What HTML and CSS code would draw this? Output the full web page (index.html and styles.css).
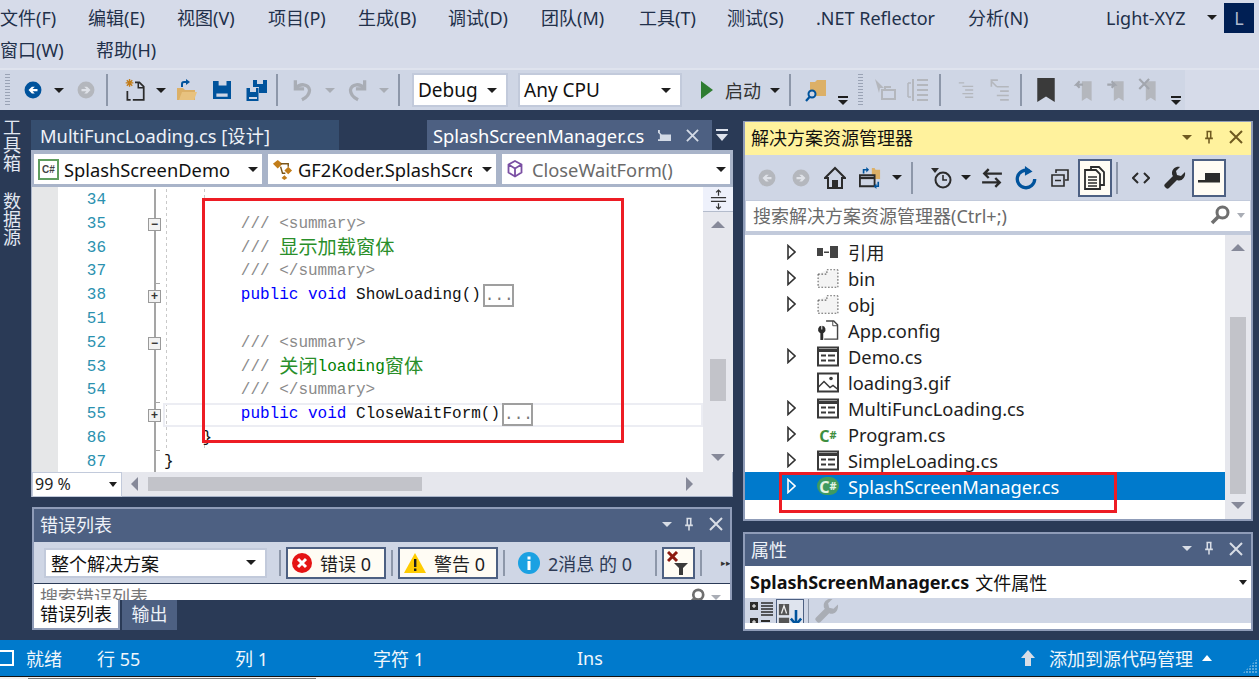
FILE: index.html
```html
<!DOCTYPE html>
<html lang="zh-CN">
<head>
<meta charset="utf-8">
<title>SplashScreenManager.cs</title>
<link rel="stylesheet" href="styles.css">
</head>
<body>
<svg class="defs" aria-hidden="true">
  <symbol id="i-back" viewBox="0 0 16 16"><circle cx="8" cy="8" r="7.5" fill="#00539c"/><path d="M12 7H7.6l2-2H7L4 8l3 3h2.6l-2-2H12z" fill="#fff"/></symbol>
  <symbol id="i-fwd" viewBox="0 0 16 16"><circle cx="8" cy="8" r="7.5" fill="#b4b7bd"/><path d="M4 7h4.4l-2-2H9l3 3-3 3H6.400l2-2H4z" fill="#dfe2e8"/></symbol>
  <symbol id="i-gback" viewBox="0 0 16 16"><circle cx="8" cy="8" r="7.5" fill="#b4b7bd"/><path d="M12 7H7.6l2-2H7L4 8l3 3h2.6l-2-2H12z" fill="#dfe2e8"/></symbol>
  <symbol id="i-new" viewBox="0 0 20 22"><path d="M5 1v7M1.500 4.500h7M2.500 2l5 5M7.500 2l-5 5" stroke="#c27d1a" stroke-width="1.300" fill="none"/><path d="M10 4h4l4 4v12H8M3 12v8h3" stroke="#2b2b2b" stroke-width="1.600" fill="none"/><path d="M13 4v5h5" stroke="#2b2b2b" stroke-width="1.400" fill="none"/></symbol>
  <symbol id="i-open" viewBox="0 0 22 22"><path d="M1 9h6l2 2h10v10H4L1 21z" fill="#dcb067"/><path d="M3 21l3-8h15l-3 8z" fill="#e8c27f"/><path d="M6 8V5a2 2 0 0 1 2-2h4" stroke="#00539c" stroke-width="2" fill="none"/><path d="M10 0l4 3-4 3z" fill="#00539c"/></symbol>
  <symbol id="i-save" viewBox="0 0 16 16"><path d="M0 0h16v16H0z" fill="#00539c"/><path d="M5 0h7v4H5zM3 11h10v3H3z" fill="#cfd6e5"/></symbol>
  <symbol id="i-saveall" viewBox="0 0 22 22"><path d="M8 1h14v13H8z" fill="#00539c"/><path d="M12 1h6v4h-6z" fill="#cfd6e5"/><path d="M1 8h13v14H1z" fill="#cfd6e5"/><path d="M1.500 9h12v13h-12z" fill="#00539c"/><path d="M5 9h6v4H5zM4 18h8v2H4z" fill="#cfd6e5"/></symbol>
  <symbol id="i-undo" viewBox="0 0 20 22"><path d="M3 2v8h8" fill="none" stroke="#a9adb5" stroke-width="3"/><path d="M4 9c3-4 11-4 12 2 0 4-3 7-7 9" fill="none" stroke="#a9adb5" stroke-width="3"/></symbol>
  <symbol id="i-redo" viewBox="0 0 20 22"><path d="M17 2v8H9" fill="none" stroke="#a9adb5" stroke-width="3"/><path d="M16 9C13 5 5 5 4 11c0 4 3 7 7 9" fill="none" stroke="#a9adb5" stroke-width="3"/></symbol>
  <symbol id="i-play" viewBox="0 0 12 18"><path d="M0 0l12 9-12 9z" fill="#2f7d32"/></symbol>
  <symbol id="i-find" viewBox="0 0 22 24"><path d="M5 4h5l2-2h9v16H5z" fill="#dcb067"/><circle cx="7" cy="16" r="3.500" fill="#cfd6e5" stroke="#00539c" stroke-width="2"/><path d="M4.500 19L1 23" stroke="#00539c" stroke-width="2.200"/></symbol>
  <symbol id="i-d1" viewBox="0 0 22 24"><path d="M1 1l9 9H6l-1 5z" fill="#b4b7bd"/><path d="M8 12h13v9H8zM11 12V9h6" fill="none" stroke="#b4b7bd" stroke-width="2"/></symbol>
  <symbol id="i-d2" viewBox="0 0 22 24"><path d="M6 1v22M10 2h11M10 7h11M10 12h11M10 17h11M10 22h11" stroke="#b4b7bd" stroke-width="2"/><path d="M1 5h3M1 19h3M1 5v14" stroke="#b4b7bd" stroke-width="1.500" fill="none"/></symbol>
  <symbol id="i-d3" viewBox="0 0 18 20"><path d="M1 2h6M5 6h12M8 10h9M5 14h12M8 18h9" stroke="#b4b7bd" stroke-width="1.500"/></symbol>
  <symbol id="i-d4" viewBox="0 0 20 22"><path d="M9 2H3v6M3 3l5 5" stroke="#b4b7bd" stroke-width="1.500" fill="none"/><path d="M8 8h11M11 12h8M8 16h11M11 20h8" stroke="#b4b7bd" stroke-width="1.500"/></symbol>
  <symbol id="i-mark" viewBox="0 0 16 22"><path d="M0 0h16v22l-8-5-8 5z" fill="#3a3a3a"/></symbol>
  <symbol id="i-m1" viewBox="0 0 18 22"><path d="M7 3h9v18l-4.500-3L7 21z" fill="#b4b7bd"/><path d="M8 6H2l3-3M2 6l3 3" fill="none" stroke="#a2a6ae" stroke-width="2"/></symbol>
  <symbol id="i-m2" viewBox="0 0 18 22"><path d="M2 3h9v18l-4.500-3L2 21z" fill="#b4b7bd" transform="translate(5)"/><path d="M1 6h7l-3-3M8 6l-3 3" fill="none" stroke="#a2a6ae" stroke-width="2"/></symbol>
  <symbol id="i-m3" viewBox="0 0 18 22"><path d="M7 3h9v18l-4.500-3L7 21z" fill="#b4b7bd"/><path d="M1 1l9 9M10 1l-9 9" stroke="#a2a6ae" stroke-width="2"/></symbol>
  <symbol id="i-class" viewBox="0 0 22 22"><path d="M6 1l5 4-5 5-5-5z" fill="#c27d1a"/><path d="M17 8l4 4-4 4-4-4zM13 17l3 3-3 2-3-2z" fill="#c27d1a"/><path d="M9 8l2 7h3M9 5h8v3" fill="none" stroke="#7a5518" stroke-width="1.500"/></symbol>
  <symbol id="i-cube" viewBox="0 0 16 18"><path d="M8 1l6.500 3.500v8L8 16.500 1.500 12.500v-8zM1.500 4.500L8 8.500l6.500-4M8 8.500V16.500" fill="none" stroke="#7a4fa3" stroke-width="1.800"/></symbol>
  <symbol id="i-pin" viewBox="0 0 14 16"><path d="M4 1h6M5 1v8h4V1M2.500 9h9M7 9v6" fill="none" stroke="currentColor" stroke-width="1.800"/></symbol>
  <symbol id="i-pinh" viewBox="0 0 16 14"><path d="M1 1h2v3l2 2h10v7H1v-2h2V6L1 4z" fill="currentColor"/></symbol>
  <symbol id="i-x" viewBox="0 0 14 14"><path d="M1 1l12 12M13 1L1 13" stroke="currentColor" stroke-width="2"/></symbol>
  <symbol id="i-split" viewBox="0 0 18 22"><path d="M1 9h16M1 13h16" stroke="#333" stroke-width="1.500"/><path d="M9 1v6M6.500 3.500L9 1l2.500 2.500M9 15v6M6.500 18.500L9 21l2.500-2.500" fill="none" stroke="#333" stroke-width="1.300"/></symbol>
  <symbol id="i-home" viewBox="0 0 22 22"><path d="M11 1L1 11h3v10h14V11h3z" fill="none" stroke="#2b2b2b" stroke-width="2"/><path d="M8 13h6v8H8z" fill="#2b2b2b"/></symbol>
  <symbol id="i-sync" viewBox="0 0 24 24"><path d="M14 1h3l1 2h5v10H14z" fill="#dcb067"/><path d="M1 9h16v12H1z" fill="#cfd6e5" stroke="#2b2b2b" stroke-width="2"/><path d="M1 12h16" stroke="#2b2b2b" stroke-width="2.500"/><path d="M5 7V3h4" fill="none" stroke="#00539c" stroke-width="1.800"/><path d="M8 0l3 3-3 3z" fill="#00539c"/><path d="M21 16v5h-3" fill="none" stroke="#00539c" stroke-width="1.800"/><path d="M19 24l-3-3 3-3z" fill="#00539c"/></symbol>
  <symbol id="i-hist" viewBox="0 0 22 22"><circle cx="13" cy="13" r="7.500" fill="none" stroke="#2b2b2b" stroke-width="2"/><path d="M13 8v5h4" fill="none" stroke="#2b2b2b" stroke-width="1.600"/><path d="M1 1h8L5 6z" fill="#2b2b2b"/></symbol>
  <symbol id="i-swap" viewBox="0 0 20 18"><path d="M4 5h15M7 1L3 5l4 4M1 13h15M13 9l4 4-4 4" fill="none" stroke="#2b2b2b" stroke-width="2.200"/></symbol>
  <symbol id="i-refresh" viewBox="0 0 20 22"><path d="M13 4.500A8 8 0 1 0 18 12" fill="none" stroke="#00539c" stroke-width="3"/><path d="M9 0l7 5-7 4z" fill="#00539c"/></symbol>
  <symbol id="i-coll" viewBox="0 0 18 18"><path d="M5 4V1h12v10h-3M1 6h12v11H1zM4 11.500h6" fill="#cfd6e5" stroke="#2b2b2b" stroke-width="1.600"/></symbol>
  <symbol id="i-all" viewBox="0 0 22 24"><path d="M7 4V1h8l5 5v13h-4" fill="none" stroke="#2b2b2b" stroke-width="1.800"/><path d="M1 4h11l4 4v15H1z" fill="none" stroke="#2b2b2b" stroke-width="1.800"/><path d="M4 11h9M4 14h9M4 17h9M4 20h9" stroke="#2b2b2b" stroke-width="1.400"/></symbol>
  <symbol id="i-code" viewBox="0 0 18 12"><path d="M6 1L1 6l5 5M12 1l5 5-5 5" fill="none" stroke="#2b2b2b" stroke-width="2"/></symbol>
  <symbol id="i-wrench" viewBox="0 0 22 22"><path d="M21 5l-4 4-4-1-1-4 4-4c-4-1-8 2-8 6 0 1 0 2 1 3L1 17c-1 1-1 2 0 3l1 1c1 1 2 1 3 0l8-8c4 2 9-2 8-8z" fill="currentColor"/></symbol>
  <symbol id="i-dash" viewBox="0 0 24 12"><path d="M8 1h15v7H8z M1 8h22v2.500H1z" fill="#2b2b2b"/></symbol>
  <symbol id="i-search" viewBox="0 0 20 20"><circle cx="12.500" cy="7.500" r="5.500" fill="none" stroke="#6f6f6f" stroke-width="3"/><path d="M8 12l-6 6" stroke="#6f6f6f" stroke-width="3.500"/></symbol>
  <symbol id="i-ref" viewBox="0 0 22 12"><path d="M0 2h6v8H0zM13 0h8v12h-8zM7 5.500h5v1.500H7z" fill="#444"/></symbol>
  <symbol id="i-dotted" viewBox="0 0 20 18"><path d="M9 1h10M1 5v12h18V1M1 5h8V1" fill="#f4f4f4" stroke="#666" stroke-width="1" stroke-dasharray="1.500 1.500"/></symbol>
  <symbol id="i-config" viewBox="0 0 22 22"><path d="M9 1h8l4 4v15H7" fill="none" stroke="#444" stroke-width="1.500"/><path d="M16 1v5h5" fill="none" stroke="#444"/><path d="M4 6a4 4 0 0 0-2 7l1 1v7h3v-7l1-1a4 4 0 0 0-2-7v4H4z" fill="#2b2b2b"/></symbol>
  <symbol id="i-form" viewBox="0 0 22 20"><path d="M1 1h20v18H1z" fill="#fff" stroke="#3a3a3a" stroke-width="2"/><path d="M1 4h20" stroke="#3a3a3a" stroke-width="3"/><path d="M4 8h5v2H4zM11 8h7v2h-7zM4 13h5v2H4zM11 13h7v2h-7z" fill="#3a3a3a"/></symbol>
  <symbol id="i-img" viewBox="0 0 22 20"><path d="M1 1h20v18H1z" fill="#fff" stroke="#3a3a3a" stroke-width="2"/><circle cx="14" cy="6" r="1.800" fill="#3a3a3a"/><path d="M1 15l6-6 6 6 3-2 5 4" fill="none" stroke="#3a3a3a" stroke-width="1.500"/></symbol>
  <symbol id="i-arrow" viewBox="0 0 9 16"><path d="M1 1.500L8 8l-7 6.500z" fill="none" stroke="currentColor" stroke-width="1.600"/></symbol>
  <symbol id="i-err" viewBox="0 0 20 20"><circle cx="10" cy="10" r="10" fill="#e51414"/><path d="M6 6l8 8M14 6l-8 8" stroke="#fff" stroke-width="3"/></symbol>
  <symbol id="i-warn" viewBox="0 0 22 20"><path d="M11 0l11 20H0z" fill="#ffcc00"/><path d="M10 6h2.400v8H10zM10 15.500h2.400V18H10z" fill="#1e1e1e"/></symbol>
  <symbol id="i-info" viewBox="0 0 22 22"><circle cx="11" cy="11" r="11" fill="#1ba1e2"/><path d="M9.500 4.500h3v3h-3zM9.500 9h3v9h-3z" fill="#fff"/></symbol>
  <symbol id="i-filter" viewBox="0 0 22 24"><path d="M1 1l9 9M10 1l-9 9" stroke="#8c1a10" stroke-width="3"/><path d="M7 12h14l-5 5v7h-4v-7z" fill="#3a3a3a"/></symbol>
  <symbol id="i-tree" viewBox="0 0 24 24"><path d="M0 1h8v8H0zM0 17h8v8H0z" fill="#2b2b2b"/><path d="M2 5h4M4 3v4M2 21h4M4 19v4" stroke="#fff"/><path d="M11 2h12M11 5h12M11 8h12M11 11h12M11 14h12" stroke="#2b2b2b" stroke-width="1.500"/><path d="M11 20h9" stroke="#2b2b2b" stroke-width="2"/></symbol>
  <symbol id="i-az" viewBox="0 0 28 30"><path d="M1 1h12v13H1z" fill="#555"/><path d="M1 17h12v13H1z" fill="#555"/><path d="M4 12l3-9 3 9" stroke="#eee" stroke-width="1.500" fill="none"/><path d="M21 8v16M15 18l6 7 6-7" fill="none" stroke="#00539c" stroke-width="3"/></symbol>
  <symbol id="i-up" viewBox="0 0 14 16"><path d="M7 0L0 8h4v8h6V8h4z" fill="#d8dde6"/></symbol>
</svg>

<div class="app">
  <nav class="menu">
    <div class="menu-row">
      <span>文件(F)</span><span>编辑(E)</span><span>视图(V)</span><span>项目(P)</span><span>生成(B)</span><span>调试(D)</span><span>团队(M)</span><span>工具(T)</span><span>测试(S)</span><span>.NET Reflector</span><span>分析(N)</span>
      <span class="user">Light-XYZ</span><i class="caret"></i><b class="avatar">L</b>
    </div>
    <div class="menu-row second"><span>窗口(W)</span><span>帮助(H)</span></div>
  </nav>

  <div class="toolbar">
    <i class="grip"></i>
    <svg class="ic"><use href="#i-back"/></svg><i class="caret"></i><svg class="ic"><use href="#i-fwd"/></svg><i class="sep"></i>
    <svg class="ic big"><use href="#i-new"/></svg><i class="caret"></i><svg class="ic big"><use href="#i-open"/></svg><svg class="ic"><use href="#i-save"/></svg><svg class="ic big"><use href="#i-saveall"/></svg><i class="sep"></i>
    <svg class="ic big"><use href="#i-undo"/></svg><i class="caret dim"></i><svg class="ic big"><use href="#i-redo"/></svg><i class="caret dim"></i><i class="sep"></i>
    <div class="combo debug"><span>Debug</span><i class="caret"></i></div>
    <div class="combo cpu"><span>Any CPU</span><i class="caret"></i></div>
    <svg class="ic play"><use href="#i-play"/></svg><span class="start">启动</span><i class="caret"></i><i class="sep"></i>
    <svg class="ic big"><use href="#i-find"/></svg><i class="more"></i><i class="grip"></i>
    <svg class="ic big"><use href="#i-d1"/></svg><svg class="ic big"><use href="#i-d2"/></svg><i class="sep"></i>
    <svg class="ic"><use href="#i-d3"/></svg><svg class="ic big"><use href="#i-d4"/></svg><i class="sep"></i>
    <svg class="ic big"><use href="#i-mark"/></svg><svg class="ic big"><use href="#i-m1"/></svg><svg class="ic big"><use href="#i-m2"/></svg><svg class="ic big"><use href="#i-m3"/></svg><i class="more"></i>
  </div>

  <main class="main">
    <aside class="strip"><span>工具箱</span><span>数据源</span></aside>

    <div class="left">
      <section class="doc">
        <div class="tabs">
          <div class="tab one">MultiFuncLoading.cs [设计]</div>
          <div class="tab two"><span>SplashScreenManager.cs</span><svg class="tab-ic pinh"><use href="#i-pinh"/></svg><svg class="tab-ic"><use href="#i-x"/></svg></div>
          <div class="tab-menu"></div>
        </div>
        <div class="navbar">
          <div class="nav-box"><span class="cs-badge">C#</span><span class="nav-text">SplashScreenDemo</span><i class="caret"></i></div>
          <div class="nav-box"><svg class="nav-ic"><use href="#i-class"/></svg><span class="nav-text clip">GF2Koder.SplashScreenManager</span><i class="caret"></i></div>
          <div class="nav-box"><svg class="nav-ic cube"><use href="#i-cube"/></svg><span class="nav-text dim">CloseWaitForm()</span><i class="caret"></i></div>
        </div>
        <div class="editor">
          <div class="margin"></div>
          <div class="lines">
            <div class="line"><span class="num">34</span><span class="fold"></span><span class="code"></span></div>
            <div class="line"><span class="num">35</span><span class="fold"><i class="box">−</i></span><span class="code in"><s>/// &lt;summary&gt;</s></span></div>
            <div class="line"><span class="num">36</span><span class="fold"></span><span class="code in"><s>/// </s><em class="zh">显示加载窗体</em></span></div>
            <div class="line"><span class="num">37</span><span class="fold tick"></span><span class="code in"><s>/// &lt;/summary&gt;</s></span></div>
            <div class="line"><span class="num">38</span><span class="fold"><i class="box">+</i></span><span class="code in"><b>public void</b> ShowLoading()<u>...</u></span></div>
            <div class="line"><span class="num">51</span><span class="fold"></span><span class="code"></span></div>
            <div class="line"><span class="num">52</span><span class="fold"><i class="box">−</i></span><span class="code in"><s>/// &lt;summary&gt;</s></span></div>
            <div class="line"><span class="num">53</span><span class="fold"></span><span class="code in"><s>/// </s><em class="zh">关闭</em><em>loading</em><em class="zh">窗体</em></span></div>
            <div class="line"><span class="num">54</span><span class="fold tick"></span><span class="code in"><s>/// &lt;/summary&gt;</s></span></div>
            <div class="line"><span class="num">55</span><span class="fold"><i class="box">+</i></span><span class="code in current"><b>public void</b> CloseWaitForm()<u>...</u></span></div>
            <div class="line"><span class="num">86</span><span class="fold tick"></span><span class="code close">}</span></div>
            <div class="line"><span class="num">87</span><span class="fold"></span><span class="code end">}</span></div>
          </div>
          <div class="vscroll">
            <div class="split"><svg><use href="#i-split"/></svg></div>
            <i class="tri up"></i>
            <div class="track"><i class="thumb"></i></div>
            <i class="tri down"></i>
          </div>
          <div class="redbox code-red"></div>
        </div>
        <div class="hscroll">
          <div class="zoom"><span>99 %</span><i class="caret"></i></div>
          <i class="tri left-tri"></i>
          <div class="htrack"><i class="hthumb"></i></div>
          <i class="tri right-tri"></i>
        </div>
      </section>

      <section class="errors">
        <header class="title dark"><span>错误列表</span><i class="caret light"></i><svg class="t-ic"><use href="#i-pin"/></svg><svg class="t-ic x"><use href="#i-x"/></svg></header>
        <div class="err-bar">
          <div class="combo scope"><span>整个解决方案</span><i class="caret"></i></div>
          <i class="sep"></i>
          <div class="toggle"><svg><use href="#i-err"/></svg><span>错误 0</span></div>
          <i class="sep"></i>
          <div class="toggle"><svg class="warn"><use href="#i-warn"/></svg><span>警告 0</span></div>
          <i class="sep"></i>
          <div class="plain"><svg><use href="#i-info"/></svg><span>2消息 的 0</span></div>
          <i class="sep"></i>
          <div class="toggle filter"><svg><use href="#i-filter"/></svg></div>
          <i class="sep"></i>
          <span class="chev">▸▸</span>
        </div>
        <div class="err-search"><span>搜索错误列表</span><svg><use href="#i-search"/></svg><i class="caret dim"></i></div>
      </section>
      <div class="bottom-tabs"><span class="btab on">错误列表</span><span class="btab">输出</span></div>
    </div>

    <div class="right">
      <section class="explorer">
        <header class="title active"><span>解决方案资源管理器</span><i class="caret brown"></i><svg class="t-ic"><use href="#i-pin"/></svg><svg class="t-ic x"><use href="#i-x"/></svg></header>
        <div class="ex-bar">
          <svg class="ic"><use href="#i-gback"/></svg><svg class="ic"><use href="#i-fwd"/></svg><svg class="ic big"><use href="#i-home"/></svg><svg class="ic big"><use href="#i-sync"/></svg><i class="caret"></i><i class="sep"></i>
          <svg class="ic big"><use href="#i-hist"/></svg><i class="caret"></i><svg class="ic big"><use href="#i-swap"/></svg><svg class="ic big"><use href="#i-refresh"/></svg><svg class="ic"><use href="#i-coll"/></svg>
          <div class="press"><svg><use href="#i-all"/></svg></div><i class="sep"></i>
          <svg class="ic"><use href="#i-code"/></svg><svg class="ic big wrench"><use href="#i-wrench"/></svg>
          <div class="press"><svg class="dash"><use href="#i-dash"/></svg></div>
        </div>
        <div class="ex-search"><span>搜索解决方案资源管理器(Ctrl+;)</span><svg><use href="#i-search"/></svg><i class="caret dim"></i></div>
        <div class="tree">
          <ul class="nodes">
            <li><svg class="exp"><use href="#i-arrow"/></svg><svg class="ni ref"><use href="#i-ref"/></svg>引用</li>
            <li><svg class="exp"><use href="#i-arrow"/></svg><svg class="ni"><use href="#i-dotted"/></svg>bin</li>
            <li><svg class="exp"><use href="#i-arrow"/></svg><svg class="ni"><use href="#i-dotted"/></svg>obj</li>
            <li><i class="exp"></i><svg class="ni"><use href="#i-config"/></svg>App.config</li>
            <li><svg class="exp"><use href="#i-arrow"/></svg><svg class="ni"><use href="#i-form"/></svg>Demo.cs</li>
            <li><i class="exp"></i><svg class="ni"><use href="#i-img"/></svg>loading3.gif</li>
            <li><svg class="exp"><use href="#i-arrow"/></svg><svg class="ni"><use href="#i-form"/></svg>MultiFuncLoading.cs</li>
            <li><svg class="exp"><use href="#i-arrow"/></svg><span class="ni csharp">C<small>#</small></span>Program.cs</li>
            <li><svg class="exp"><use href="#i-arrow"/></svg><svg class="ni"><use href="#i-form"/></svg>SimpleLoading.cs</li>
            <li class="selected"><svg class="exp"><use href="#i-arrow"/></svg><span class="ni csharp sel">C<small>#</small></span>SplashScreenManager.cs</li>
          </ul>
          <div class="vscroll tree-scroll">
            <i class="tri up"></i>
            <div class="track"><i class="thumb"></i></div>
            <i class="tri down"></i>
          </div>
          <div class="redbox tree-red"></div>
        </div>
      </section>

      <section class="props">
        <header class="title dark"><span>属性</span><i class="caret light"></i><svg class="t-ic"><use href="#i-pin"/></svg><svg class="t-ic x"><use href="#i-x"/></svg></header>
        <div class="prop-head"><b>SplashScreenManager.cs</b><span>文件属性</span><i class="caret"></i></div>
        <div class="prop-bar"><svg class="p1"><use href="#i-tree"/></svg><div class="p-press"><svg><use href="#i-az"/></svg></div><i class="sep"></i><svg class="p3"><use href="#i-wrench"/></svg></div>
      </section>
    </div>
  </main>

  <footer class="status">
    <i class="st-box"></i><span class="s1">就绪</span><span class="s2">行 55</span><span class="s3">列 1</span><span class="s4">字符 1</span><span class="s5">Ins</span>
    <svg class="st-up"><use href="#i-up"/></svg><span class="s6">添加到源代码管理</span><i class="caret white"></i><i class="st-grip"></i>
  </footer>
  <div class="tail"></div>
</div>
</body>
</html>
```

FILE: styles.css
```css
* { box-sizing: border-box; }
html, body { margin: 0; padding: 0; }
body {
  width: 1259px; height: 679px; overflow: hidden;
  font-family: "Noto Sans", "Noto Sans CJK SC", sans-serif;
  font-size: 18px; color: #1e1e1e; background: #2a3a56;
}
.defs { position: absolute; width: 0; height: 0; }
i, em { font-style: normal; }
svg { display: block; }
.app { display: grid; grid-template-rows: 68px 42px 530px 36px 3px; height: 679px; }

/* shared */
.caret { display: block; width: 0; height: 0; flex: none;
  border-left: 5px solid transparent; border-right: 5px solid transparent; border-top: 5px solid #1e1e1e; }
.caret.dim { border-top-color: #a9adb5; }
.caret.light { border-top-color: #d8dde6; }
.caret.brown { border-top-color: #6f5a20; }
.caret.white { border-top: 0; border-bottom: 6px solid #fff; }
.sep { display: block; flex: none; width: 2px; height: 32px; background: #8d97a9; }
.ic { width: 18px; height: 18px; flex: none; }
.ic.big { width: 22px; height: 24px; }

/* menu */
.menu { background: #d6dbe9; color: #22304a; }
.menu-row { height: 33px; display: grid; align-items: center; padding-top: 2px;
  grid-template-columns: 88px 89px 91px 90px 90px 93px 98px 88px 89px 152px 138px 101px 17px 31px; }
.menu-row.second { padding-top: 1px; grid-template-columns: 96px 96px; }
.menu-row span { line-height: 30px; white-space: nowrap; }
.avatar { width: 30px; height: 30px; background: #001f54; color: #aeb9cf; font-weight: 400; text-align: center; line-height: 30px; }

/* main toolbar: each track is the distance to the next item */
.toolbar { background: linear-gradient(#cfd6e5, #cfd6e5) 0 0 / 1185px 100% no-repeat, #d6dbe9; display: grid; align-items: center; justify-items: start; padding-left: 5px; border-top: 2px solid #dfe3ee;
  grid-template-columns: 19px 30px 23px 29px 18px 32px 20px 37px 32px 31px 16px 33px 21px 33px 19px 14px 106px 183px 24px 45px 19px 16px 33px 20px 16px 33px 32px 18px 31px 32px 15px 38px 32px 32px 34px 1fr; }
.grip { display: block; flex: none; width: 5px; height: 32px;
  background: repeating-linear-gradient(to bottom, #9aa3b5 0 1px, transparent 1px 3px); }
.combo { display: flex; align-items: center; justify-content: space-between; background: #fff;
  border: 2px solid #c2cadb; height: 34px; padding: 0 9px 0 4px; flex: none; font-size: 19px; color: #111; }
.combo.debug { width: 96px; }
.combo.cpu { width: 164px; }
.toolbar .play { width: 12px; height: 18px; }
.start { flex: none; font-size: 18px; color: #333; }
.more { display: block; flex: none; width: 10px; height: 8px; align-self: end; margin-bottom: 6px; border-top: 2px solid #1e1e1e; }
.more::after { content: ""; display: block; margin-top: 2px; width: 0; height: 0;
  border-left: 5px solid transparent; border-right: 5px solid transparent; border-top: 5px solid #1e1e1e; }

/* main */
.main { display: grid; grid-template-columns: 31px 702px 525px; min-height: 0; }
.strip { display: flex; width: 22px; gap: 20px; padding-top: 8px; writing-mode: vertical-rl; color: #e2e7f1; font-size: 18px; line-height: 22px; }
.left { display: grid; grid-template-rows: 377px 103px 30px; padding-top: 10px; }
.doc { display: grid; grid-template-rows: 30px 37px 285px 25px; }
.tabs { display: flex; color: #fff; }
.tab { height: 30px; display: flex; align-items: center; font-size: 18.3px; white-space: nowrap; }
.tab.one { width: 308px; background: #364e6f; padding-left: 9px; color: #eef2f8; }
.tab.two { width: 285px; margin-left: 88px; background: #4d6082; padding-left: 6px; }
.tab-ic { width: 13px; height: 13px; color: #d3dae6; flex: none; margin-left: 14px; }
.tab-ic.pinh { width: 15px; margin-left: 13px; }
.tab-menu { width: 12px; height: 13px; margin: 9px 0 0 4px; border-top: 2px solid #dde2ec; }
.tab-menu::after { content: ""; display: block; margin-top: 3px; border-left: 6px solid transparent; border-right: 6px solid transparent; border-top: 7px solid #dde2ec; width: 0; }
.navbar { display: grid; grid-template-columns: 228px 228px 228px; column-gap: 6px; padding: 4px 3px 3px; background: #a9b4c9; }
.nav-box { display: flex; align-items: center; background: #fff; padding: 0 4px 0 4px; min-width: 0; gap: 5px; }
.nav-text { flex: 1; overflow: hidden; white-space: nowrap; font-size: 18.3px; color: #111; }
.nav-text.clip { margin-right: 5px; }
.nav-text.dim { color: #6a6a6a; }
.cs-badge { flex: none; width: 21px; height: 21px; border: 2px solid #5f9e5f; background: #fff; font: 700 10px/17px "Liberation Sans", sans-serif; color: #444; text-align: center; }
.nav-ic { width: 21px; height: 21px; flex: none; }
.nav-ic.cube { width: 16px; height: 18px; margin: 0 4px 0 1px; }

.editor { position: relative; display: grid; grid-template-columns: 26px 645px 30px; border-left: 1px solid #a9b4c9; background: #fff; overflow: hidden; }
.margin { background: #e6e7e8; }
.lines { padding-top: 2px; overflow: hidden; }
.line { display: flex; height: 23.8px; font: 16px/23.8px "Liberation Mono", "Noto Sans CJK SC", monospace; white-space: pre; }
.num { width: 48px; text-align: right; color: #2b91af; }
.fold { width: 57px; display: flex; align-items: center; justify-content: flex-end; padding-right: 1px;
  background: linear-gradient(#a5a5a5, #a5a5a5) 48px 0 / 2px 100% no-repeat; }
.fold.tick { background: linear-gradient(#a5a5a5, #a5a5a5) 48px 0 / 2px 100% no-repeat, linear-gradient(#a5a5a5, #a5a5a5) 48px 100% / 6px 1px no-repeat; }
.box { display: block; width: 13px; height: 13px; margin-right: 1px; border: 1px solid #9a9a9a; background: #f2f2f2; color: #333; font: 700 12px/10px "Liberation Sans", sans-serif; text-align: center; }
.code { flex: 1; min-width: 0; color: #111;
  background:
    repeating-linear-gradient(to bottom, #c9c9c9 0 3px, transparent 3px 6px) 3px 0 / 1px 100% no-repeat,
    repeating-linear-gradient(to bottom, #c9c9c9 0 3px, transparent 3px 6px) 41px 0 / 1px 100% no-repeat; }
.code.in { padding-left: 77.8px; }
.code.close { padding-left: 39.4px; }
.code.end { background: none; padding-left: 1px; }
.code s { text-decoration: none; color: #8a8a8a; }
.code b { font-weight: 400; color: #0000ff; }
.code em { color: #008000; }
.code .zh { display: inline-block; height: 23px; line-height: 18px; vertical-align: top; font-family: "Noto Sans CJK SC", sans-serif; font-size: 19.2px; color: #2a8f2a; }
.code u { display: inline-block; text-decoration: none; width: 31px; height: 23px; border: 2px solid #9f9f9f; color: #777; margin-left: 2px; line-height: 21px; vertical-align: top; }
.code.current { box-shadow: inset 0 0 0 2px #ecedf3; }

.vscroll { display: flex; flex-direction: column; align-items: center; background: #e6e7ed; }
.split { align-self: stretch; height: 25px; background: #eef1fb; border-bottom: 1px solid #b4bccc; display: flex; align-items: center; justify-content: center; }
.split svg { width: 17px; height: 21px; }
.tri { display: block; width: 0; height: 0; flex: none; }
.tri.up { border-left: 7px solid transparent; border-right: 7px solid transparent; border-bottom: 7px solid #868999; margin-top: 9px; }
.tri.down { border-left: 7px solid transparent; border-right: 7px solid transparent; border-top: 7px solid #868999; margin: 4px 0 11px; }
.track { flex: 1; width: 16px; padding-top: 131px; }
.thumb { display: block; height: 42px; background: #c2c3c9; }
.hscroll { display: flex; align-items: center; background: #e6e7ed; border: 1px solid #a9b4c9; border-top: 0; }
.zoom { width: 90px; height: 25px; background: #fff; border: 1px solid #c2cadb; display: flex; align-items: center; justify-content: space-between; padding: 0 4px 0 2px; font-size: 16px; }
.zoom .caret { border-left-width: 4px; border-right-width: 4px; }
.tri.left-tri { border-top: 7px solid transparent; border-bottom: 7px solid transparent; border-right: 7px solid #868999; margin-left: 9px; }
.tri.right-tri { border-top: 7px solid transparent; border-bottom: 7px solid transparent; border-left: 7px solid #868999; margin-right: 39px; }
.htrack { flex: 1; padding: 0 264px 0 10px; }
.hthumb { display: block; height: 14px; background: #c2c3c9; }

.redbox { position: absolute; border: 3px solid #ed1c24; pointer-events: none; }
.code-red { left: 170px; top: 11px; width: 422px; height: 245px; }

/* error list */
.errors { margin: 10px 1px 0; border: 2px solid #8f9cb8; border-bottom: 0; display: grid; grid-template-rows: 33px 41px 1fr; overflow: hidden; }
.title { display: flex; align-items: center; padding: 0 5px 3px 6px; font-size: 18px; }
.title > span { flex: 1; }
.title.dark { background: #4d6082; color: #eef2f8; }
.title.active { background: #fff29d; color: #111; }
.title.active .t-ic { color: #6f5a20; }
.t-ic { width: 12px; height: 15px; margin-left: 11px; flex: none; color: #d8dde6; }
.t-ic.x { width: 14px; height: 14px; margin-left: 14px; margin-right: 3px; }
.err-bar { display: flex; align-items: center; background: #cfd6e5; padding-left: 10px; gap: 5px; font-size: 18px; }
.err-bar .sep { height: 26px; background: #8d97a9; }
.combo.scope { width: 223px; height: 30px; font-size: 18px; margin-right: 7px; padding-left: 5px; }
.toggle { display: flex; align-items: center; gap: 8px; width: 100px; height: 32px; background: #fffcf4; border: 2px solid #4d6082; padding-left: 4px; white-space: nowrap; }
.toggle svg { width: 20px; height: 20px; flex: none; }
.toggle svg.warn { width: 22px; }
.toggle.filter { width: 33px; padding-left: 3px; }
.toggle.filter svg { width: 22px; height: 24px; }
.plain { display: flex; align-items: center; gap: 8px; width: 140px; padding-left: 8px; color: #2d3a55; white-space: nowrap; }
.plain svg { width: 22px; height: 22px; flex: none; }
.chev { font-size: 9px; margin-left: 14px; color: #333; }
.err-search { height: 17px; background: #fff; display: flex; padding: 2px 10px 0 6px; align-items: flex-start; color: #777; font-size: 18px; line-height: 22px; margin-top: 1px; overflow: hidden; gap: 6px; }
.err-search span { flex: 1; }
.err-search svg { width: 18px; height: 18px; margin-top: 2px; }
.err-search .caret { margin-top: 9px; }
.bottom-tabs { display: flex; padding-left: 1px; gap: 2px; font-size: 18px; }
.btab { width: 55px; height: 30px; text-align: center; line-height: 28px; background: #4d6082; color: #eef2f8; }
.btab.on { width: 88px; background: #fff; color: #111; border: 2px solid #8f9cb8; border-top: 0; }

/* right column */
.right { display: grid; grid-template-rows: 400px 99px; row-gap: 11px; padding: 11px 5px 0 10px; }
.explorer { border: 2px solid #8f9cb8; border-top: 1px solid #8f9cb8; display: grid; grid-template-rows: 33px 45px 35px 1fr; background: #fff; overflow: hidden; }
.ex-bar { display: grid; align-items: center; justify-items: start; background: #cfd6e5; padding-left: 13px;
  grid-template-columns: 34px 32px 35px 33px 19px 19px 31px 20px 34px 36px 27px 38px 16px 32px 28px 1fr; }
.press { width: 34px; height: 38px; flex: none; background: #fffcf4; border: 2px solid #4d6082; display: flex; align-items: center; justify-content: center; }
.press svg { width: 22px; height: 24px; }
.press svg.dash { width: 24px; height: 12px; }
.wrench { color: #2b2b2b; }
.ex-search { display: flex; align-items: center; background: #fff; border: 1px solid #c2cadb; border-width: 1px 1px 4px; padding: 0 5px 2px 7px; color: #6a6a6a; font-size: 18px; gap: 7px; outline: 1px solid #cfd6e5; }
.ex-search span { flex: 1; }
.ex-search svg { width: 20px; height: 20px; }
.ex-search .caret { border-left-width: 4px; border-right-width: 4px; }
.tree { position: relative; display: flex; min-height: 0; background: #fff; }
.nodes { list-style: none; margin: 0; padding: 4px 0 0; flex: 1; }
.nodes li { display: flex; align-items: center; height: 26px; padding-left: 42px; white-space: nowrap; font-size: 18.3px; }
.nodes li.selected { background: #007acc; color: #fff; height: 28px; margin-top: -1px; }
.exp { display: block; width: 9px; height: 16px; flex: none; color: #333; margin-right: 21px; }
.ni { width: 22px; height: 21px; margin-right: 9px; flex: none; }
.ni.ref { height: 12px; }
.csharp { font: 700 16px/21px "Noto Sans", sans-serif; color: #3f8f3f; text-align: center; }
.csharp small { font-size: 11px; vertical-align: 3px; }
.csharp.sel { color: #e4f4e4; background: #3f9a5f; border-radius: 9px; height: 18px; line-height: 18px; }
.selected .exp { color: #fff; }
.tree-scroll { width: 26px; flex: none; }
.tree-scroll .track { padding-top: 66px; display: flex; }
.tree-scroll .thumb { flex: 1; height: auto; }
.tree-scroll .tri.down { margin: 8px 0 10px; }
.tree-red { left: 34px; top: 237px; width: 338px; height: 41px; }
.props { border: 2px solid #8f9cb8; display: grid; grid-template-rows: 32px 32px 25px 1fr; background: #fff; overflow: hidden; }
.prop-head { display: flex; align-items: center; padding: 0 4px 0 5px; font-size: 18px; gap: 6px; color: #111; }
.prop-head b { font-family: "Noto Sans", sans-serif; }
.prop-head span { flex: 1; }
.prop-head .caret { border-left-width: 4px; border-right-width: 4px; }
.prop-bar { display: flex; background: #cfd6e5; overflow: hidden; padding: 1px 0 0 5px; }
.p1 { width: 24px; height: 24px; margin-top: 2px; flex: none; }
.p-press { width: 28px; height: 32px; border: 1px solid #4d6082; background: #dfe4ee; margin-left: 2px; padding: 2px 0 0 1px; flex: none; }
.p-press svg { width: 24px; height: 28px; }
.prop-bar .sep { width: 1px; height: 24px; margin: 0 4px; }
.p3 { width: 24px; height: 24px; color: #a9adb5; flex: none; margin-left: 2px; }

/* status */
.status { display: flex; align-items: center; background: #007acc; color: #f0f6fb; font-size: 18px; }
.st-box { display: block; width: 14px; height: 16px; border: 2px solid #fff; border-left: 0; flex: none; margin-right: 12px; }
.s1 { width: 71px; } .s2 { width: 138px; } .s3 { width: 138px; } .s4 { width: 204px; } .s5 { width: 444px; }
.st-up { width: 14px; height: 16px; flex: none; margin-right: 14px; }
.s6 { width: 153px; white-space: nowrap; }
.st-grip { display: block; width: 14px; height: 14px; margin: 16px 2px 0 auto; flex: none;
  background: radial-gradient(circle at 1px 1px, #5aa9dc 1px, transparent 1.2px) 0 0 / 3px 3px;
  clip-path: polygon(100% 0, 100% 100%, 0 100%); }
.tail { background: #f0f0f0 linear-gradient(#777, #777) 28px 1px / 288px 1px no-repeat; border-top: 1px solid #111; }
```
